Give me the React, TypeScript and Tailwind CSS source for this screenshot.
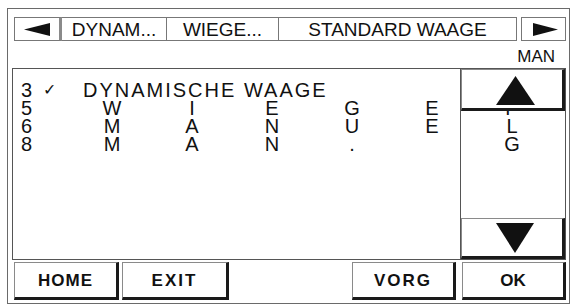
const rows: { num: string; chars: string[] }[] = [
  { num: '5', chars: ['W', 'I', 'E', 'G', 'E', 'P'] },
  { num: '6', chars: ['M', 'A', 'N', 'U', 'E', 'L'] },
  { num: '8', chars: ['M', 'A', 'N', '.', '', 'G'] },
];

const btn =
  'relative z-10 bg-white border-l border-t border-[#8a8a8a] border-r-[3px] border-b-[3px] border-r-[#1a1a1a] border-b-[#1a1a1a] flex items-center justify-center';

export default function App() {
  return (
    <div className="w-[571px] h-[307px] bg-white pt-[8px] pl-[7px] text-[#111] font-['Liberation_Sans',Arial,sans-serif]">
      <div className="w-[563px] h-[296px] border border-[#6a6a6a] flex flex-col pt-[8px]">
        {/* Tabs */}
        <div className="flex h-[24px] pl-[6px] text-[19px] leading-none">
          <div className="w-[48px] border border-[#777] border-r-[3px] border-r-[#8a8a8a] flex items-center justify-center">
            <svg width="26" height="13" viewBox="0 0 26 13">
              <polygon points="0,6.5 26,0 26,13" fill="#111" />
            </svg>
          </div>
          <div className="w-[105px] border-y border-r border-[#777] flex items-center justify-center">
            DYNAM...
          </div>
          <div className="w-[112px] border-y border-r border-[#777] flex items-center justify-center">
            WIEGE...
          </div>
          <div className="w-[238px] border-y border-r border-[#777] flex items-center justify-center">
            STANDARD WAAGE
          </div>
          <div className="w-[4px]" />
          <div className="w-[45px] border border-[#777] flex items-center justify-center pl-[4px]">
            <svg width="25" height="13" viewBox="0 0 25 13">
              <polygon points="0,0 25,6.5 0,13" fill="#111" />
            </svg>
          </div>
        </div>

        {/* Mode */}
        <div className="h-[27px] flex items-center justify-end pr-[14px] text-[17px] leading-none pt-[4px]">
          MAN
        </div>

        {/* List + scroll */}
        <div className="flex h-[192px] pl-[4px]">
          <div className="w-[449px] border border-[#555] pt-[12px] pl-[8px] text-[20px] leading-[18px]">
            <div className="flex">
              <div className="w-[51px] flex">
                <span className="w-[22px]">3</span>
                <span className="text-[16px]">✓</span>
              </div>
              <span className="pl-[11px] tracking-[2px] whitespace-nowrap">DYNAMISCHE WAAGE</span>
            </div>
            {rows.map((r) => (
              <div key={r.num} className="flex">
                <div className="w-[51px] shrink-0">{r.num}</div>
                <div className="grid grid-cols-[repeat(6,80px)] text-center shrink-0">
                  {r.chars.map((c, i) => (
                    <span key={i}>{c}</span>
                  ))}
                </div>
              </div>
            ))}
          </div>
          <div className="w-[105px] border-y border-r border-[#555] flex flex-col justify-between">
            <div className={`${btn} h-[42px] pl-[6px] pt-[2px]`}>
              <svg width="39" height="29" viewBox="0 0 39 29">
                <polygon points="19.5,0 39,29 0,29" fill="#111" />
              </svg>
            </div>
            <div className={`${btn} h-[41px] pl-[6px]`}>
              <svg width="38" height="30" viewBox="0 0 38 30">
                <polygon points="0,0 38,0 19,30" fill="#111" />
              </svg>
            </div>
          </div>
        </div>

        {/* Bottom buttons */}
        <div className="flex h-[38px] mt-[2px] pl-[6px] text-[17px] font-bold leading-none">
          <div className={`${btn} w-[105px] tracking-[1px]`}>HOME</div>
          <div className={`${btn} w-[107px] ml-[3px] tracking-[2px]`}>EXIT</div>
          <div className={`${btn} w-[104px] ml-[123px] tracking-[2px]`}>VORG</div>
          <div className={`${btn} w-[104px] ml-[6px]`}>OK</div>
        </div>
      </div>
    </div>
  );
}
